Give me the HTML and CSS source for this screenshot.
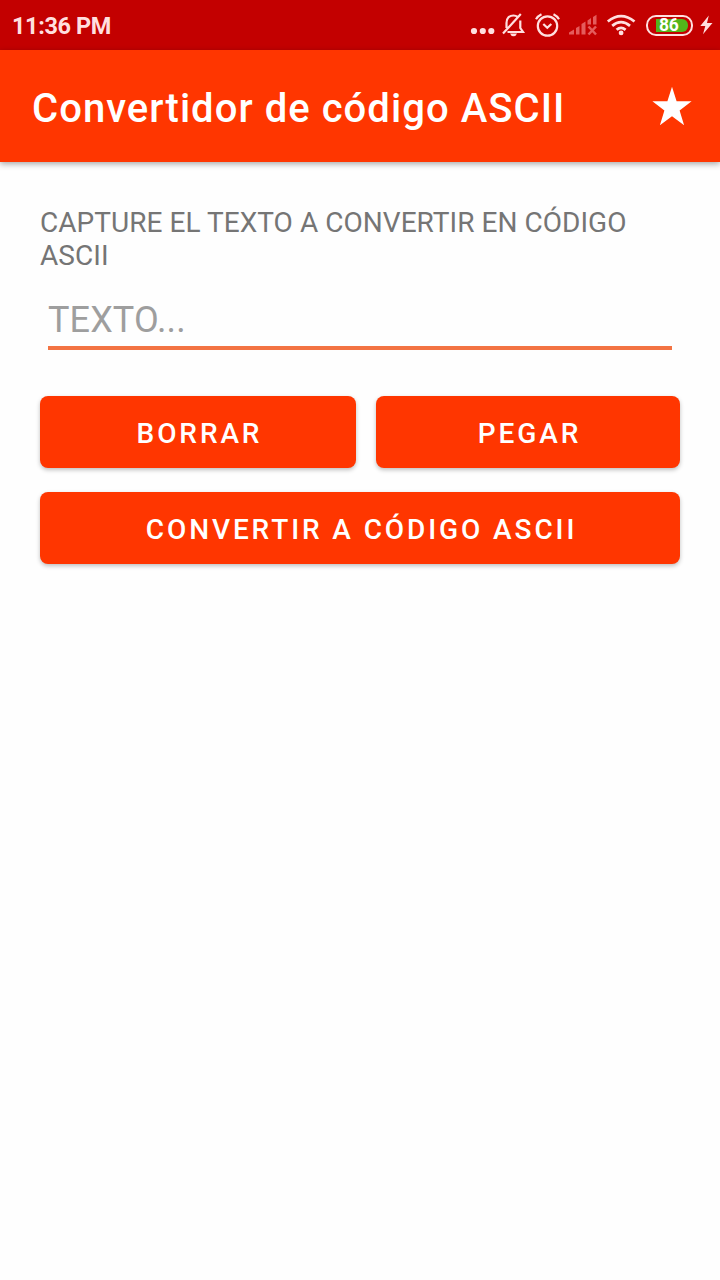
FILE: index.html
```
<!DOCTYPE html>
<html lang="es">
<head>
  <meta charset="UTF-8" />
  <meta name="viewport" content="width=device-width, initial-scale=1.0" />
  <title>Convertidor de código ASCII</title>
  <link rel="stylesheet" href="styles.css">
</head>
<body>
  <!-- Barra de estado -->
  <div class="status-bar">
    <span class="clock">11:36 PM</span>
    <div class="status-icons">
      <svg class="icon-dots" width="26" height="26" viewBox="0 0 26 26">
        <circle cx="4" cy="19" r="3.1" /><circle cx="12.8" cy="19" r="3.1" /><circle cx="21.3" cy="19" r="3.1" />
      </svg>
      <svg class="icon-bell line" width="24" height="26" viewBox="0 0 24 26">
        <path d="M4.500 16V11C4.500 6 7.500 3.500 11.500 3.500Q14 3.500 15.500 4.800M18.300 8.500V16L21 20H5.500M1 21.500L18.800 2" />
        <path class="solid" d="M8 21.500H15Q14 24.200 11.500 24.200T8 21.500Z" />
      </svg>
      <svg class="icon-alarm line" width="26" height="26" viewBox="0 0 26 26">
        <circle cx="13.500" cy="14" r="9.700" />
        <path d="M9.300 12L13.300 15.800L17.300 12M2 7.200Q3.800 4 7.500 2.200M25 7.200Q23.200 4 19.500 2.200" />
      </svg>
      <svg class="icon-signal" width="28" height="26" viewBox="0 0 28 26">
        <path d="M0 22.500V20.500L5 17.500V22.500ZM7 22.500V16L10.500 14V22.500ZM12.500 22.500V12L16.500 9.500V22.500ZM18.500 12.500V8.500L22 6V12.500ZM24 12.500V5L27.500 2.800V12.500Z" />
        <path class="cross" d="M19.500 14.500L27 22.500M27 14.500L19.500 22.500" />
      </svg>
      <svg class="icon-wifi" width="30" height="26" viewBox="0 0 30 26">
        <path d="M1.800 9.500Q15 -1.200 28.500 9.500M6.200 13.800Q15 6.500 24 13.800M10.600 17.800Q15 14 19.600 17.800" />
        <circle cx="15.100" cy="20.900" r="2.400" />
      </svg>
      <div class="battery"><span class="battery-level">86</span></div>
      <svg class="icon-bolt" width="13" height="26" viewBox="0 0 13 26">
        <path d="M8.800 3.500L0.300 14H5.300L3 22.300L12.500 11H7Z" />
      </svg>
    </div>
  </div>

  <header class="app-bar">
    <h1>Convertidor de código ASCII</h1>
    <svg class="star" width="40" height="40" viewBox="0 0 40 40">
      <path d="M20 .8L24.600 15.300L39.600 15.300L27.600 24.600L32.100 39.300L20 30.300L7.900 39.300L12.400 24.600L.4 15.300L15.400 15.300Z" />
    </svg>
  </header>

  <main class="content">
    <label class="caption" for="texto">CAPTURE EL TEXTO A CONVERTIR EN CÓDIGO ASCII</label>
    <input type="text" id="texto" placeholder="TEXTO..." />

    <div class="buttons">
      <button class="btn borrar">BORRAR</button>
      <button class="btn pegar">PEGAR</button>
      <button class="btn convertir">CONVERTIR A CÓDIGO ASCII</button>
    </div>
  </main>
</body>
</html>
```
FILE: styles.css
```
* {
  box-sizing: border-box;
}
body {
  margin: 0;
  min-height: 100vh;
  background-color: #fefefe;
  font-family: Roboto, sans-serif;
}

.status-bar {
  display: flex;
  justify-content: space-between;
  height: 50px;
  padding: 0 7px 0 12px;
  background-color: #c30000;
  color: #ffdfdf;
}
.clock {
  font-size: 23.5px;
  font-weight: 700;
  line-height: 52px;
  letter-spacing: -0.4px;
}
.status-icons {
  display: flex;
  align-items: center;
  fill: #ffdfdf;
}
.line {
  fill: none;
  stroke: #ffdfdf;
  stroke-width: 2.2;
}
.solid {
  fill: #ffdfdf;
  stroke: none;
}
.icon-bell {
  margin-left: 6px;
}
.icon-alarm {
  margin-left: 8px;
}
.icon-signal {
  margin-left: 9px;
  fill: #e45c5c;
}
.cross {
  stroke: #e45c5c;
  stroke-width: 2.5;
}
.icon-wifi {
  margin-left: 9px;
}
.icon-wifi path {
  fill: none;
  stroke: #ffdfdf;
  stroke-width: 2.8;
}
.battery {
  width: 47px;
  height: 21px;
  margin-left: 10px;
  padding: 2px 3px 2px 8px;
  border: 2px solid #ffdfdf;
  border-radius: 10px;
}
.battery-level {
  display: block;
  width: 32px;
  height: 13px;
  padding-left: 3px;
  border-radius: 0 6px 6px 0;
  background-color: #53b51b;
  color: #fff;
  font-size: 17.5px;
  font-weight: 700;
  line-height: 13px;
  letter-spacing: -0.4px;
}
.icon-bolt {
  margin-left: 7px;
}

.app-bar {
  display: flex;
  align-items: center;
  justify-content: space-between;
  height: 112px;
  padding: 0 28px 0 32px;
  background-color: #ff3600;
  color: #fff;
  box-shadow: 0 2px 6px rgba(0, 0, 0, 0.35);
}
.app-bar h1 {
  margin: 0;
  padding-top: 4px;
  font-size: 40px;
  font-weight: 500;
  letter-spacing: 1.05px;
}
.star {
  fill: #fff;
}

.content {
  padding: 44px 40px 0;
}
.caption {
  display: block;
  color: #757575;
  font-size: 28px;
  line-height: 33px;
  letter-spacing: 0.04px;
}
input {
  display: block;
  width: calc(100% - 16px);
  height: 62px;
  margin: 16px 8px 46px;
  padding: 8px 0 2px;
  border: 0;
  border-bottom: 4px solid #f37343;
  outline: 0;
  background: none;
  font-family: inherit;
  font-size: 36px;
  letter-spacing: 0.1px;
}
input::placeholder {
  color: #9e9e9e;
}

.buttons {
  display: grid;
  grid-template-columns: 316px 304px;
  gap: 24px 20px;
}
.btn {
  height: 72px;
  padding: 3px 0 0 3px;
  border: 0;
  border-radius: 8px;
  background-color: #ff3600;
  color: #fff;
  box-shadow: 0 2px 4px rgba(0, 0, 0, 0.25);
  font-family: inherit;
  font-size: 28px;
  font-weight: 500;
  letter-spacing: 2.9px;
}
.convertir {
  grid-column: 1 / 3;
}
```
